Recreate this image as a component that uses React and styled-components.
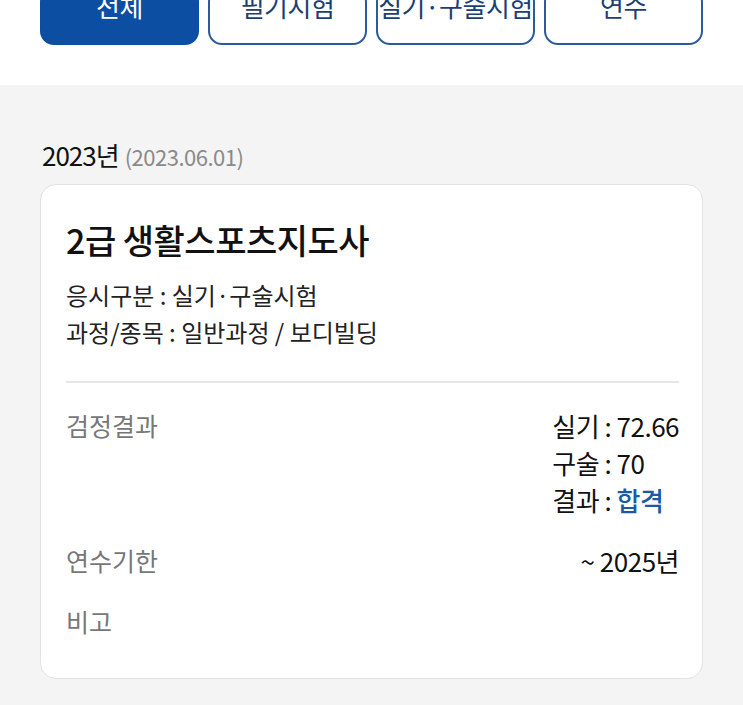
import React from 'react';
import styled, { createGlobalStyle } from 'styled-components';

const GlobalStyle = createGlobalStyle`
  html, body {
    margin: 0;
    padding: 0;
    background: #f4f4f4;
  }
  body {
    font-family: 'Noto Sans CJK KR', 'Noto Sans', sans-serif;
    color: #111;
    overflow: hidden;
  }
`;

const TabArea = styled.div`
  background: #fff;
  padding: 0 40px 40px;
`;

const TabRow = styled.div`
  display: grid;
  grid-template-columns: repeat(4, 1fr);
  gap: 9px;
  margin-top: -12px;
`;

const Tab = styled.button`
  height: 57px;
  box-sizing: border-box;
  border-radius: 14px;
  border: 2px solid ${({ active }) => (active ? '#0b4ea2' : '#2b5c99')};
  background: ${({ active }) => (active ? '#0b4ea2' : '#fff')};
  color: ${({ active }) => (active ? '#fff' : '#1c3f73')};
  font-family: inherit;
  font-size: 26px;
  line-height: 1;
  padding: 0 0 22px;
  display: flex;
  align-items: center;
  justify-content: center;
  white-space: nowrap;
  letter-spacing: -0.5px;
`;

const Section = styled.section`
  padding: 55px 40px 40px;
`;

const DateHeader = styled.div`
  line-height: 30px;
  font-size: 26px;
  letter-spacing: -1px;
  margin-bottom: 13px;
  margin-left: 2px;
  span {
    font-size: 22px;
    color: #8a8a8a;
    letter-spacing: -0.5px;
    margin-left: 6px;
  }
`;

const Card = styled.div`
  background: #fff;
  border: 1px solid #e2e2e2;
  border-radius: 16px;
  padding: 33px 23px 38px 25px;
`;

const Title = styled.h2`
  margin: 0;
  font-size: 34px;
  font-weight: 500;
  line-height: 44px;
  letter-spacing: -0.5px;
`;

const Info = styled.div`
  margin-top: 14px;
  font-size: 24px;
  line-height: 37px;
  color: #222;
`;

const Divider = styled.hr`
  border: 0;
  height: 2px;
  background: #e6e6e6;
  margin: 31px 0 24px;
`;

const Row = styled.div`
  display: flex;
  justify-content: space-between;
  align-items: flex-start;
  margin-top: ${({ gap }) => gap || 0}px;
  font-size: 25px;
  line-height: 37px;
`;

const Label = styled.div`
  color: #777;
`;

const Values = styled.div`
  text-align: left;
  color: #111;
  font-size: 26px;
  letter-spacing: -0.5px;
`;

const Pass = styled.span`
  color: #1a5aa8;
  font-weight: 500;
`;

const tabs = ['전체', '필기시험', '실기·구술시험', '연수'];

export default function App() {
  return (
    <>
      <GlobalStyle />
      <TabArea>
        <TabRow>
          {tabs.map((t, i) => (
            <Tab key={t} active={i === 0}>
              {t}
            </Tab>
          ))}
        </TabRow>
      </TabArea>
      <Section>
        <DateHeader>
          2023년<span>(2023.06.01)</span>
        </DateHeader>
        <Card>
          <Title>2급 생활스포츠지도사</Title>
          <Info>
            <div>응시구분 : 실기·구술시험</div>
            <div>과정/종목 : 일반과정 / 보디빌딩</div>
          </Info>
          <Divider />
          <Row>
            <Label>검정결과</Label>
            <Values>
              <div>실기 : 72.66</div>
              <div>구술 : 70</div>
              <div>
                결과 : <Pass>합격</Pass>
              </div>
            </Values>
          </Row>
          <Row gap={24}>
            <Label>연수기한</Label>
            <Values>~ 2025년</Values>
          </Row>
          <Row gap={24}>
            <Label>비고</Label>
          </Row>
        </Card>
      </Section>
    </>
  );
}
